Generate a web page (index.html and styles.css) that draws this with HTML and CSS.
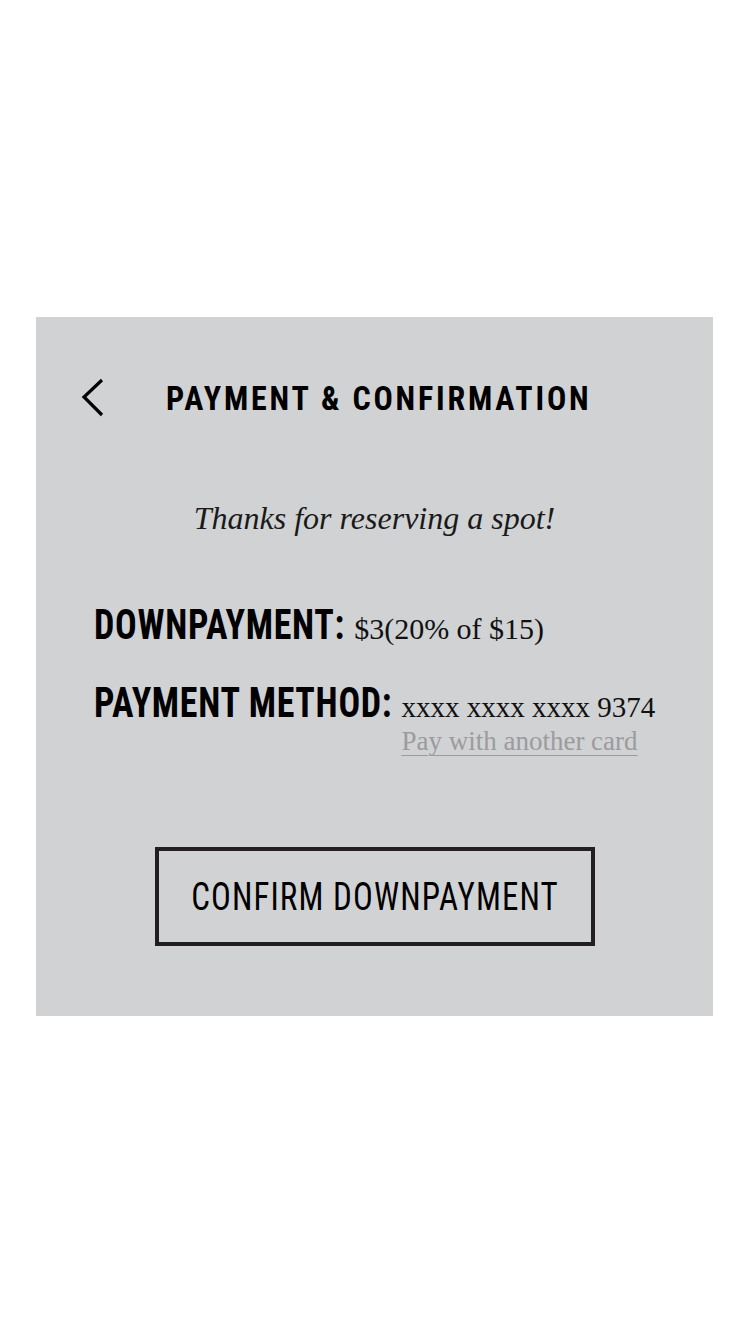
FILE: index.html
```html
<!DOCTYPE html>
<html>
<head>
<meta charset="utf-8">
<link rel="stylesheet" href="styles.css">
</head>
<body>
<main class="card">
  <header class="header">
    <button class="back" aria-label="Back">
      <svg width="24" height="40" viewBox="0 0 24 40"><polyline points="21,2 3,19 21,37" fill="none" stroke="#000" stroke-width="3.2"/></svg>
    </button>
    <h1 class="title">PAYMENT &amp; CONFIRMATION</h1>
  </header>
  <p class="thanks">Thanks for reserving a spot!</p>
  <div class="details">
    <div class="row">
      <span class="label">DOWNPAYMENT:</span>
      <span class="value">$3(20% of $15)</span>
    </div>
    <div class="row">
      <span class="label">PAYMENT METHOD:</span>
      <div class="value-col">
        <span class="value card-num">xxxx xxxx xxxx 9374</span>
        <a class="alt-link" href="#">Pay with another card</a>
      </div>
    </div>
  </div>
  <div class="actions">
    <button class="confirm"><span class="confirm-text">CONFIRM DOWNPAYMENT</span></button>
  </div>
</main>
</body>
</html>
```
FILE: styles.css
```css
html, body {
  margin: 0;
  padding: 0;
  background: #ffffff;
}
body {
  width: 750px;
  height: 1334px;
  padding-top: 317px;
  box-sizing: border-box;
}
.card {
  margin-left: 36px;
  width: 677px;
  height: 699px;
  background: #d1d2d4;
  box-sizing: border-box;
  padding-top: 60px;
  display: flex;
  flex-direction: column;
}
.header {
  display: flex;
  align-items: center;
  padding-left: 45px;
  height: 42px;
}
.back {
  background: none;
  border: 0;
  padding: 0;
  width: 24px;
  height: 40px;
  display: block;
}
.back svg { display: block; }
.title {
  margin: 0 0 0 61px;
  font-family: Roboto, "Open Sans", sans-serif;
  font-stretch: 75%;
  font-weight: 700;
  font-size: 32px;
  letter-spacing: 2.8px;
  color: #000;
  line-height: 42px;
  white-space: nowrap;
  transform: scaleY(1.05);
}
.thanks {
  margin: 79px 0 0 0;
  text-align: center;
  font-family: "Liberation Serif", serif;
  font-style: italic;
  font-size: 32px;
  color: #1a1a1a;
  line-height: 40px;
}
.details {
  margin-top: 67px;
  padding-left: 58px;
  display: flex;
  flex-direction: column;
  gap: 34px;
}
.row {
  display: flex;
  align-items: baseline;
  gap: 9px;
}
.label {
  font-family: Roboto, "Open Sans", sans-serif;
  font-stretch: 75%;
  font-weight: 700;
  font-size: 36px;
  letter-spacing: 0.7px;
  color: #000;
  line-height: 44px;
  white-space: nowrap;
  transform: scaleY(1.17);
  transform-origin: 0 34px;
}
.value {
  font-family: "Liberation Serif", serif;
  font-size: 30px;
  color: #111;
  white-space: nowrap;
}
.card-num {
  font-size: 29px;
}
.value-col {
  display: flex;
  flex-direction: column;
}
.alt-link {
  font-family: "Liberation Serif", serif;
  font-size: 27px;
  color: #9b9b9d;
  text-decoration: underline;
  text-decoration-thickness: 1px;
  text-underline-offset: 5px;
  line-height: 34px;
  white-space: nowrap;
}
.actions {
  margin-top: 89px;
  display: flex;
  justify-content: center;
}
.confirm {
  width: 440px;
  height: 99px;
  background: transparent;
  border: 4px solid #231f20;
  padding: 0 0 0 1px;
  display: flex;
  align-items: center;
  justify-content: center;
}
.confirm-text {
  display: inline-block;
  font-family: Roboto, "Open Sans", sans-serif;
  font-stretch: 75%;
  font-weight: 400;
  font-size: 33px;
  letter-spacing: 1.1px;
  color: #000;
  white-space: nowrap;
  transform: scaleY(1.15);
}
```
